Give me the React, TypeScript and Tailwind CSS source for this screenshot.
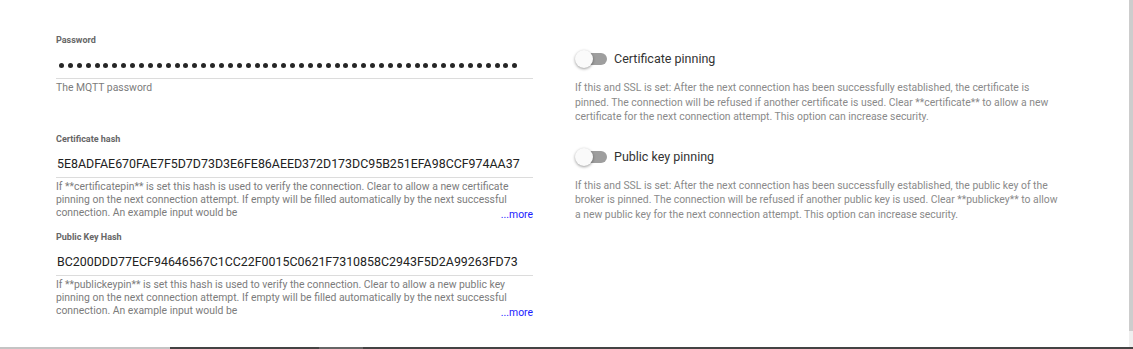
import React from "react";

const font = { fontFamily: "Roboto, 'Noto Sans', sans-serif" };

function Help({ lines, more }: { lines: string[]; more?: boolean }) {
  return (
    <div className="flex items-end mt-[2px]">
      <div className="flex-1 min-w-0 text-[10.4px] leading-[13px] text-[#7c7c7c]">
        {lines.map((l, i) => (
          <div key={i} className="whitespace-nowrap">
            {l}
          </div>
        ))}
      </div>
      {more && (
        <a className="shrink-0 text-[10.4px] leading-[13px] text-[#1a1aff] mb-[-2px]">...more</a>
      )}
    </div>
  );
}

function Dots() {
  return (
    <div className="flex h-[18px] items-center">
      {Array.from({ length: 52 }).map((_, i) => (
        <span key={i} className="w-[8.9px] flex justify-center">
          <span className="w-[5px] h-[5px] rounded-full bg-[#262626]" />
        </span>
      ))}
    </div>
  );
}

function Field({
  label,
  value,
  password,
  lines,
  more,
}: {
  label: string;
  value: string;
  password?: boolean;
  lines: string[];
  more?: boolean;
}) {
  return (
    <div>
      <div className="text-[9px] leading-[12px] font-bold text-[#666]">{label}</div>
      <div className="mt-[10px] pb-[4px] border-b border-[#dcdcdc] h-[23px] pl-[1px]">
        {password ? (
          <div className="mt-[2px]">
            <Dots />
          </div>
        ) : (
          <div className="text-[12.4px] leading-[18px] text-[#222]">{value}</div>
        )}
      </div>
      <Help lines={lines} more={more} />
    </div>
  );
}

function Toggle({ label, lines }: { label: string; lines: string[] }) {
  return (
    <div>
      <div className="flex items-center h-[20px]">
        <div className="relative w-[32px] h-[20px] flex items-center">
          <div className="ml-[7px] w-[25px] h-[12px] rounded-full bg-[#9e9e9e]" />
          <div className="absolute left-0 top-[1px] w-[18px] h-[18px] rounded-full bg-[#fafafa] shadow-[0_1px_3px_rgba(0,0,0,0.4)]" />
        </div>
        <div className="ml-[7px] text-[12.5px] leading-[18px] text-[#333]">{label}</div>
      </div>
      <div className="mt-[12px] text-[10.4px] leading-[14.5px] text-[#8a8a8a]">
        {lines.map((l, i) => (
          <div key={i} className="whitespace-nowrap">
            {l}
          </div>
        ))}
      </div>
    </div>
  );
}

export default function App() {
  return (
    <div className="w-[1133px] h-[349px] bg-white flex flex-col overflow-hidden" style={font}>
      <div className="flex h-[347px]">
        <div className="flex-1 flex pl-[56px] pt-[34px]">
          <div className="w-[477px] flex flex-col">
            <Field label="Password" value="" password lines={["The MQTT password"]} />
            <div className="mt-[39px]">
              <Field
                label="Certificate hash"
                value="5E8ADFAE670FAE7F5D7D73D3E6FE86AEED372D173DC95B251EFA98CCF974AA37"
                lines={[
                  "If **certificatepin** is set this hash is used to verify the connection. Clear to allow a new certificate",
                  "pinning on the next connection attempt. If empty will be filled automatically by the next successful",
                  "connection. An example input would be",
                ]}
                more
              />
            </div>
            <div className="mt-[12px]">
              <Field
                label="Public Key Hash"
                value="BC200DDD77ECF94646567C1CC22F0015C0621F7310858C2943F5D2A99263FD73"
                lines={[
                  "If **publickeypin** is set this hash is used to verify the connection. Clear to allow a new public key",
                  "pinning on the next connection attempt. If empty will be filled automatically by the next successful",
                  "connection. An example input would be",
                ]}
                more
              />
            </div>
          </div>
          <div className="ml-[42px] pt-[15px] flex flex-col">
            <Toggle
              label="Certificate pinning"
              lines={[
                "If this and SSL is set: After the next connection has been successfully established, the certificate is",
                "pinned. The connection will be refused if another certificate is used. Clear **certificate** to allow a new",
                "certificate for the next connection attempt. This option can increase security.",
              ]}
            />
            <div className="mt-[22px]">
              <Toggle
                label="Public key pinning"
                lines={[
                  "If this and SSL is set: After the next connection has been successfully established, the public key of the",
                  "broker is pinned. The connection will be refused if another public key is used. Clear **publickey** to allow",
                  "a new public key for the next connection attempt. This option can increase security.",
                ]}
              />
            </div>
          </div>
        </div>
        <div className="w-[4px] flex flex-col">
          <div className="h-[331px] bg-[#cdcdcd]" />
          <div className="flex-1 bg-[#efefef]" />
        </div>
      </div>
      <div className="flex h-[2px]">
        <div className="w-[170px] bg-[#c4c4c4]" />
        <div className="w-[149px] bg-[#444]" />
        <div className="w-[44px] bg-[#666]" />
        <div className="flex-1 bg-[#444]" />
      </div>
    </div>
  );
}
